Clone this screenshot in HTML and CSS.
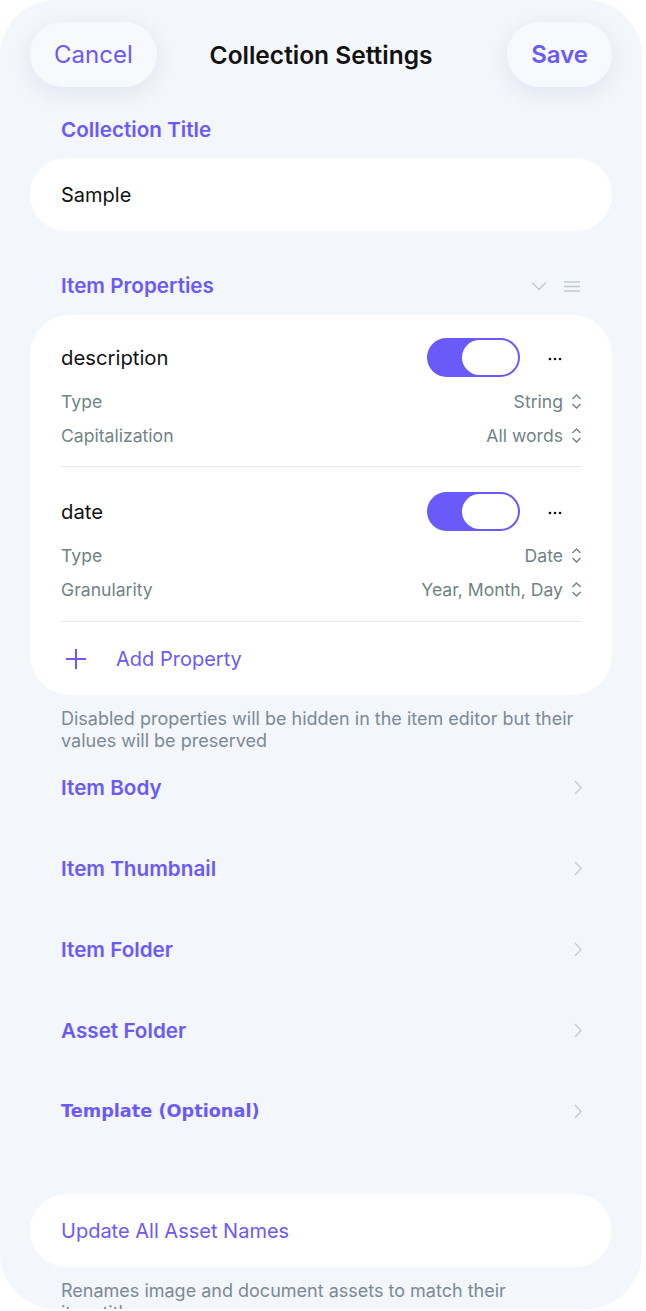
FILE: index.html
```html
<!DOCTYPE html>
<html lang="en">
<head>
  <meta charset="UTF-8">
  <meta name="viewport" content="width=device-width, initial-scale=1.0">
  <title>Collection Settings</title>
  <link rel="stylesheet" href="styles.css">
</head>
<body>
  <div class="screen">
    <!-- 頂部列 -->
    <header class="topbar">
      <button class="pill-btn">Cancel</button>
      <h1>Collection Settings</h1>
      <button class="pill-btn save">Save</button>
    </header>

    <div class="label first">Collection Title</div>
    <div class="field">Sample</div>

    <div class="label props-head">
      <span>Item Properties</span>
      <span class="head-icons">
        <svg width="16" height="10" viewBox="0 0 16 10"><path d="M1 1.5 L8 8.5 L15 1.5" fill="none" stroke="#c3cbd2" stroke-width="1.4"/></svg>
        <svg width="18" height="11" viewBox="0 0 18 11"><path d="M1 1h16M1 5.5h16M1 10h16" stroke="#c3cbd2" stroke-width="1.4"/></svg>
      </span>
    </div>

    <!-- 屬性卡 -->
    <div class="card">
      <div class="prop">
        <div class="prop-top">
          <span class="prop-name">description</span>
          <span class="toggle"><span class="knob"></span></span>
          <svg class="more" width="14" height="4" viewBox="0 0 14 4"><circle cx="2" cy="2" r="1.3"/><circle cx="7" cy="2" r="1.3"/><circle cx="12" cy="2" r="1.3"/></svg>
        </div>
        <div class="opt"><span>Type</span><span class="val">String <svg class="updown" width="11" height="17" viewBox="0 0 11 17"><path d="M1.5 6 L5.5 2 L9.5 6 M1.5 11 L5.5 15 L9.5 11" fill="none" stroke="#718384" stroke-width="1.4"/></svg></span></div>
        <div class="opt"><span>Capitalization</span><span class="val">All words <svg class="updown" width="11" height="17" viewBox="0 0 11 17"><path d="M1.5 6 L5.5 2 L9.5 6 M1.5 11 L5.5 15 L9.5 11" fill="none" stroke="#718384" stroke-width="1.4"/></svg></span></div>
      </div>
      <div class="prop">
        <div class="prop-top">
          <span class="prop-name">date</span>
          <span class="toggle"><span class="knob"></span></span>
          <svg class="more" width="14" height="4" viewBox="0 0 14 4"><circle cx="2" cy="2" r="1.3"/><circle cx="7" cy="2" r="1.3"/><circle cx="12" cy="2" r="1.3"/></svg>
        </div>
        <div class="opt"><span>Type</span><span class="val">Date <svg class="updown" width="11" height="17" viewBox="0 0 11 17"><path d="M1.5 6 L5.5 2 L9.5 6 M1.5 11 L5.5 15 L9.5 11" fill="none" stroke="#718384" stroke-width="1.4"/></svg></span></div>
        <div class="opt"><span>Granularity</span><span class="val">Year, Month, Day <svg class="updown" width="11" height="17" viewBox="0 0 11 17"><path d="M1.5 6 L5.5 2 L9.5 6 M1.5 11 L5.5 15 L9.5 11" fill="none" stroke="#718384" stroke-width="1.4"/></svg></span></div>
      </div>
      <div class="add-row">
        <svg width="22" height="22" viewBox="0 0 22 22"><path d="M11 1v20M1 11h20" stroke="#6a5af9" stroke-width="2"/></svg>
        <span>Add Property</span>
      </div>
    </div>
    <p class="note">Disabled properties will be hidden in the item editor but their values will be preserved</p>

    <!-- 導覽列 -->
    <div class="nav-list">
      <div class="nav-row"><span>Item Body</span><svg width="8" height="15" viewBox="0 0 8 15"><path d="M1 1 L7 7.5 L1 14" fill="none" stroke="#c3cbd2" stroke-width="1.3"/></svg></div>
      <div class="nav-row"><span>Item Thumbnail</span><svg width="8" height="15" viewBox="0 0 8 15"><path d="M1 1 L7 7.5 L1 14" fill="none" stroke="#c3cbd2" stroke-width="1.3"/></svg></div>
      <div class="nav-row"><span>Item Folder</span><svg width="8" height="15" viewBox="0 0 8 15"><path d="M1 1 L7 7.5 L1 14" fill="none" stroke="#c3cbd2" stroke-width="1.3"/></svg></div>
      <div class="nav-row"><span>Asset Folder</span><svg width="8" height="15" viewBox="0 0 8 15"><path d="M1 1 L7 7.5 L1 14" fill="none" stroke="#c3cbd2" stroke-width="1.3"/></svg></div>
      <div class="nav-row"><span class="alt">Template (Optional)</span><svg width="8" height="15" viewBox="0 0 8 15"><path d="M1 1 L7 7.5 L1 14" fill="none" stroke="#c3cbd2" stroke-width="1.3"/></svg></div>
    </div>

    <div class="field action">Update All Asset Names</div>
    <p class="note last">Renames image and document assets to match their item titles</p>
  </div>
</body>
</html>
```

FILE: styles.css
```css
body {
  margin: 0;
  background-color: #fff;
  font-family: Inter, "Noto Sans", sans-serif;
}
.screen {
  width: 642px;
  height: 1309px;
  box-sizing: border-box;
  padding: 0 30px;
  background-color: #f3f6fb;
  border-radius: 56px;
  overflow: hidden;
}
.topbar {
  display: grid;
  grid-template-columns: 1fr auto 1fr;
  align-items: center;
  height: 65px;
  padding-top: 22px;
}
.topbar h1 {
  margin: 0;
  font-size: 24.5px;
  font-weight: 600;
  color: #111;
}
.pill-btn {
  justify-self: start;
  height: 65px;
  padding: 0 24px;
  border: none;
  border-radius: 33px;
  background-color: #f8f9fc;
  box-shadow: 0 6px 22px rgba(40, 50, 110, 0.09);
  font-family: inherit;
  font-size: 24px;
  color: #6a5af9;
}
.pill-btn.save {
  justify-self: end;
  font-weight: 600;
}
.label {
  padding-left: 31px;
  font-size: 20.7px;
  line-height: 26px;
  font-weight: 600;
  color: #6a5af9;
}
.label.first {
  margin-top: 30px;
}
.field {
  margin-top: 15px;
  height: 73px;
  display: flex;
  align-items: center;
  padding-left: 31px;
  border-radius: 37px;
  background-color: #fff;
  font-size: 20px;
  color: #111;
}
.props-head {
  margin-top: 42px;
  display: flex;
  align-items: center;
  justify-content: space-between;
  padding-right: 31px;
}
.head-icons {
  display: flex;
  align-items: center;
  gap: 16px;
}
.card {
  margin-top: 16px;
  padding: 0 30px 0 31px;
  background-color: #fff;
  border-radius: 40px;
}
.prop {
  padding: 22px 0 14px;
  border-bottom: 1px solid #e8ebef;
}
.prop + .prop {
  padding-top: 24px;
  padding-bottom: 15px;
}
.prop-top {
  display: flex;
  align-items: center;
  height: 40px;
  margin-bottom: 7px;
}
.prop-name {
  flex: 1;
  font-size: 20.3px;
  color: #111;
}
.toggle {
  display: flex;
  justify-content: flex-end;
  width: 93px;
  height: 39px;
  box-sizing: border-box;
  padding: 2px;
  border-radius: 20px;
  background-color: #6a5af9;
}
.knob {
  width: 56px;
  height: 35px;
  border-radius: 18px;
  background-color: #fff;
}
.more {
  margin: 4px 20px 0 28px;
  fill: #111;
}
.opt {
  display: flex;
  align-items: center;
  justify-content: space-between;
  height: 34px;
  font-size: 17.6px;
  color: #718384;
}
.val {
  display: flex;
  align-items: center;
  gap: 8px;
}
.add-row {
  display: flex;
  align-items: center;
  height: 73px;
  gap: 29px;
  padding-left: 4px;
  font-size: 20px;
  color: #6a5af9;
}
.note {
  margin: 13px 0 0;
  padding: 0 31px;
  font-size: 18px;
  line-height: 22px;
  color: #7b8a96;
}
.note.last {
  padding-right: 80px;
}
.nav-list {
  margin-top: 15px;
  display: flex;
  flex-direction: column;
  gap: 41px;
}
.nav-row {
  display: flex;
  align-items: center;
  justify-content: space-between;
  height: 40px;
  padding: 0 30px 0 31px;
  font-size: 20.7px;
  font-weight: 600;
  color: #6a5af9;
}
.nav-row .alt {
  font-family: "DejaVu Sans", sans-serif;
  font-size: 17.7px;
  font-weight: 700;
}
.field.action {
  margin-top: 63px;
  color: #6a5af9;
}
```
